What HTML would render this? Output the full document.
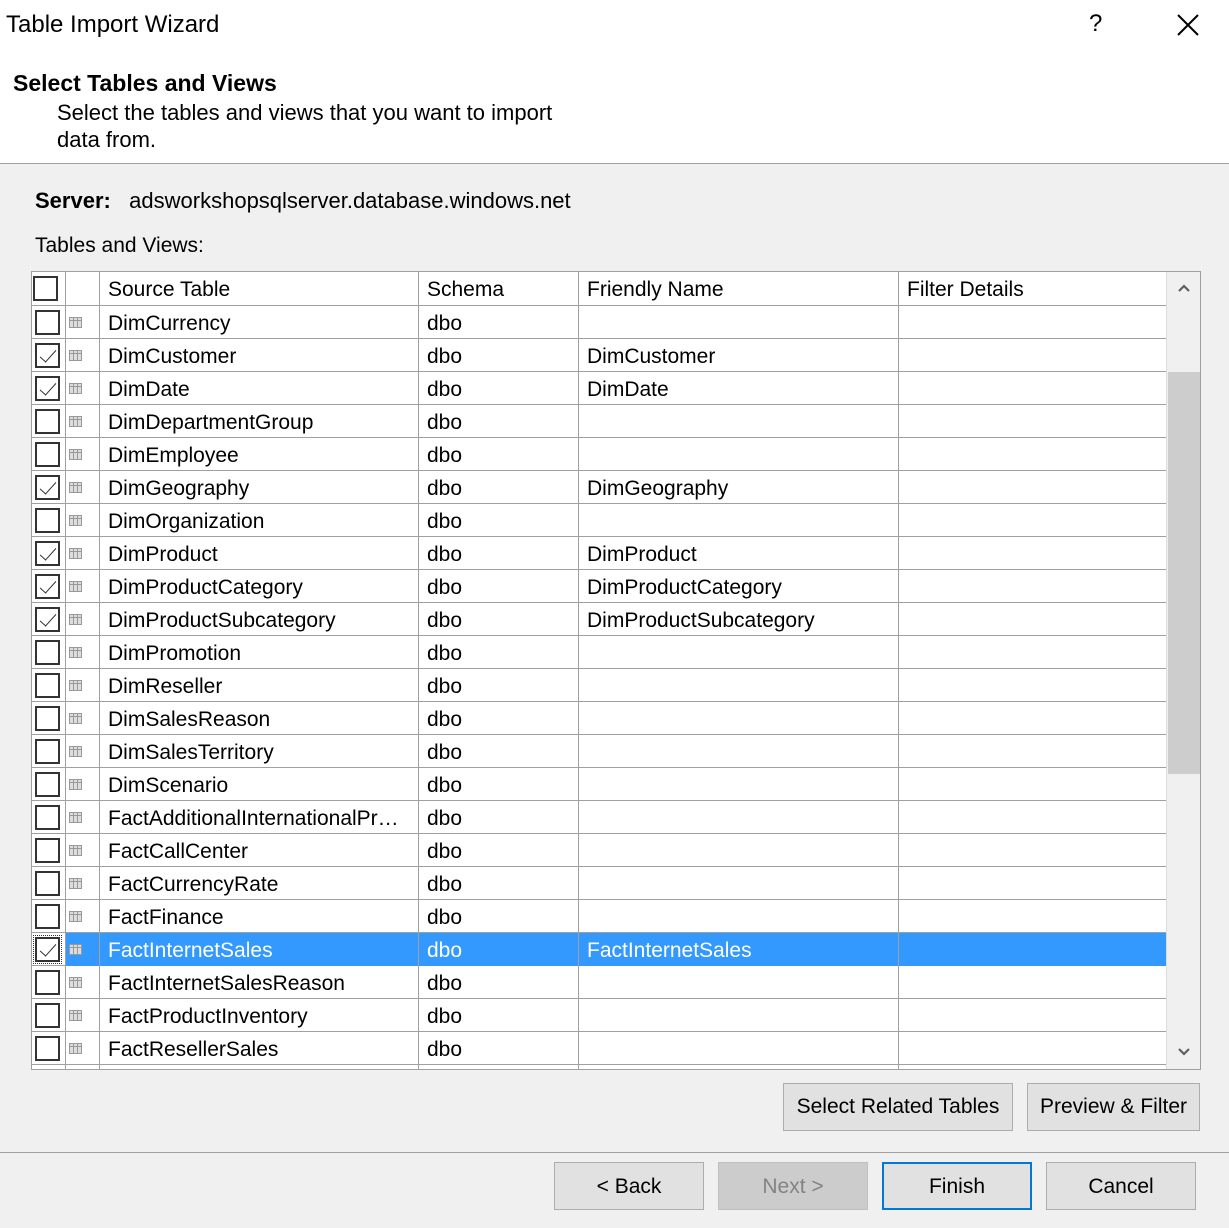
<!DOCTYPE html>
<html><head><meta charset="utf-8"><style>
*{margin:0;padding:0;box-sizing:border-box}
body{width:1229px;height:1228px;background:#f0f0f0;font-family:"Liberation Sans",sans-serif;color:#000;position:relative;overflow:hidden;font-size:21px}
.a{position:absolute;white-space:nowrap}
#top{position:absolute;left:0;top:0;width:1229px;height:164px;background:#fff;border-bottom:1px solid #a0a0a0}
#grid{position:absolute;left:31px;top:271px;width:1170px;height:799px;background:#fff;border:1px solid #a0a0a0;overflow:hidden}
.r{position:absolute;left:0;width:1135px;height:33px;border-bottom:1px solid #a0a0a0}
.r div{position:absolute;top:0;height:33px;line-height:35px;border-right:1px solid #a0a0a0;padding-left:8px;white-space:nowrap;overflow:hidden}
.c0{left:0;width:34px}.c1{left:34px;width:34px}.c2{left:68px;width:319px}.c3{left:387px;width:160px}.c4{left:547px;width:320px}.c5{left:867px;width:268px}
.cb{position:absolute;left:3px;top:4px;width:25px;height:25px;border:2px solid #333;background:#fff}
.cb.k::after{content:"";position:absolute;left:7px;top:1px;width:7px;height:15px;border-right:1.5px solid #333;border-bottom:1.5px solid #333;transform:rotate(42deg)}
.ic{position:absolute;left:3px;top:11px;width:13px;height:11px;border:1px solid #999;background:linear-gradient(#999,#999) 0 2px/100% 1px no-repeat,repeating-linear-gradient(90deg,#ddd 0 3px,#999 3px 4px),#fff}
.sel .c1,.sel .c2,.sel .c3,.sel .c4,.sel .c5{background:#3399ff;color:#fff}
.btn{position:absolute;background:#e1e1e1;border:1px solid #adadad;text-align:center;font-size:21px}
</style></head><body>
<div id="top">
<div class="a" style="left:6px;top:11px;font-size:24px">Table Import Wizard</div>
<div class="a" style="left:1089px;top:10px;font-size:24px">?</div>
<svg class="a" style="left:1177px;top:14px" width="22" height="22"><path d="M1 1L21 21M21 1L1 21" stroke="#000" stroke-width="2"/></svg>
<div class="a" style="left:13px;top:70px;font-size:23px;font-weight:bold">Select Tables and Views</div>
<div class="a" style="left:57px;top:100px;font-size:22px">Select the tables and views that you want to import</div>
<div class="a" style="left:57px;top:127px;font-size:22px">data from.</div>
</div>
<div class="a" style="left:35px;top:188px;font-size:22px"><b>Server:</b>&nbsp;&nbsp;&nbsp;adsworkshopsqlserver.database.windows.net</div>
<div class="a" style="left:35px;top:234px;font-size:21px">Tables and Views:</div>
<div id="grid">
<div class="r" style="top:0;height:34px"><div class="c0" style="background:#fff"><span class="cb" style="top:4px;left:1px"></span></div><div class="c1"></div><div class="c2" style="line-height:36px">Source Table</div><div class="c3" style="line-height:36px">Schema</div><div class="c4" style="line-height:36px">Friendly Name</div><div class="c5" style="line-height:36px">Filter Details</div></div>
<div class="r" style="top:34px"><div class="c0"><span class="cb"></span></div><div class="c1"><span class="ic"></span></div><div class="c2">DimCurrency</div><div class="c3">dbo</div><div class="c4"></div><div class="c5"></div></div>
<div class="r" style="top:67px"><div class="c0"><span class="cb k"></span></div><div class="c1"><span class="ic"></span></div><div class="c2">DimCustomer</div><div class="c3">dbo</div><div class="c4">DimCustomer</div><div class="c5"></div></div>
<div class="r" style="top:100px"><div class="c0"><span class="cb k"></span></div><div class="c1"><span class="ic"></span></div><div class="c2">DimDate</div><div class="c3">dbo</div><div class="c4">DimDate</div><div class="c5"></div></div>
<div class="r" style="top:133px"><div class="c0"><span class="cb"></span></div><div class="c1"><span class="ic"></span></div><div class="c2">DimDepartmentGroup</div><div class="c3">dbo</div><div class="c4"></div><div class="c5"></div></div>
<div class="r" style="top:166px"><div class="c0"><span class="cb"></span></div><div class="c1"><span class="ic"></span></div><div class="c2">DimEmployee</div><div class="c3">dbo</div><div class="c4"></div><div class="c5"></div></div>
<div class="r" style="top:199px"><div class="c0"><span class="cb k"></span></div><div class="c1"><span class="ic"></span></div><div class="c2">DimGeography</div><div class="c3">dbo</div><div class="c4">DimGeography</div><div class="c5"></div></div>
<div class="r" style="top:232px"><div class="c0"><span class="cb"></span></div><div class="c1"><span class="ic"></span></div><div class="c2">DimOrganization</div><div class="c3">dbo</div><div class="c4"></div><div class="c5"></div></div>
<div class="r" style="top:265px"><div class="c0"><span class="cb k"></span></div><div class="c1"><span class="ic"></span></div><div class="c2">DimProduct</div><div class="c3">dbo</div><div class="c4">DimProduct</div><div class="c5"></div></div>
<div class="r" style="top:298px"><div class="c0"><span class="cb k"></span></div><div class="c1"><span class="ic"></span></div><div class="c2">DimProductCategory</div><div class="c3">dbo</div><div class="c4">DimProductCategory</div><div class="c5"></div></div>
<div class="r" style="top:331px"><div class="c0"><span class="cb k"></span></div><div class="c1"><span class="ic"></span></div><div class="c2">DimProductSubcategory</div><div class="c3">dbo</div><div class="c4">DimProductSubcategory</div><div class="c5"></div></div>
<div class="r" style="top:364px"><div class="c0"><span class="cb"></span></div><div class="c1"><span class="ic"></span></div><div class="c2">DimPromotion</div><div class="c3">dbo</div><div class="c4"></div><div class="c5"></div></div>
<div class="r" style="top:397px"><div class="c0"><span class="cb"></span></div><div class="c1"><span class="ic"></span></div><div class="c2">DimReseller</div><div class="c3">dbo</div><div class="c4"></div><div class="c5"></div></div>
<div class="r" style="top:430px"><div class="c0"><span class="cb"></span></div><div class="c1"><span class="ic"></span></div><div class="c2">DimSalesReason</div><div class="c3">dbo</div><div class="c4"></div><div class="c5"></div></div>
<div class="r" style="top:463px"><div class="c0"><span class="cb"></span></div><div class="c1"><span class="ic"></span></div><div class="c2">DimSalesTerritory</div><div class="c3">dbo</div><div class="c4"></div><div class="c5"></div></div>
<div class="r" style="top:496px"><div class="c0"><span class="cb"></span></div><div class="c1"><span class="ic"></span></div><div class="c2">DimScenario</div><div class="c3">dbo</div><div class="c4"></div><div class="c5"></div></div>
<div class="r" style="top:529px"><div class="c0"><span class="cb"></span></div><div class="c1"><span class="ic"></span></div><div class="c2">FactAdditionalInternationalPr…</div><div class="c3">dbo</div><div class="c4"></div><div class="c5"></div></div>
<div class="r" style="top:562px"><div class="c0"><span class="cb"></span></div><div class="c1"><span class="ic"></span></div><div class="c2">FactCallCenter</div><div class="c3">dbo</div><div class="c4"></div><div class="c5"></div></div>
<div class="r" style="top:595px"><div class="c0"><span class="cb"></span></div><div class="c1"><span class="ic"></span></div><div class="c2">FactCurrencyRate</div><div class="c3">dbo</div><div class="c4"></div><div class="c5"></div></div>
<div class="r" style="top:628px"><div class="c0"><span class="cb"></span></div><div class="c1"><span class="ic"></span></div><div class="c2">FactFinance</div><div class="c3">dbo</div><div class="c4"></div><div class="c5"></div></div>
<div class="r sel" style="top:661px"><div class="c0"><span class="cb k" style="outline:1px dotted #333;outline-offset:1px"></span></div><div class="c1"><span class="ic"></span></div><div class="c2">FactInternetSales</div><div class="c3">dbo</div><div class="c4">FactInternetSales</div><div class="c5"></div></div>
<div class="r" style="top:694px"><div class="c0"><span class="cb"></span></div><div class="c1"><span class="ic"></span></div><div class="c2">FactInternetSalesReason</div><div class="c3">dbo</div><div class="c4"></div><div class="c5"></div></div>
<div class="r" style="top:727px"><div class="c0"><span class="cb"></span></div><div class="c1"><span class="ic"></span></div><div class="c2">FactProductInventory</div><div class="c3">dbo</div><div class="c4"></div><div class="c5"></div></div>
<div class="r" style="top:760px"><div class="c0"><span class="cb"></span></div><div class="c1"><span class="ic"></span></div><div class="c2">FactResellerSales</div><div class="c3">dbo</div><div class="c4"></div><div class="c5"></div></div>
<div class="r" style="top:793px"><div class="c0"><span class="cb"></span></div><div class="c1"></div><div class="c2"></div><div class="c3"></div><div class="c4"></div><div class="c5"></div></div>
<div style="position:absolute;left:1134px;top:0;width:34px;height:797px;background:#f0f0f0;border-left:1px solid #ddd">
<svg class="a" style="left:11px;top:12px" width="12" height="8"><path d="M1 7L6 2L11 7" stroke="#606060" stroke-width="2.2" fill="none"/></svg>
<div style="position:absolute;left:1px;top:100px;width:32px;height:402px;background:#cdcdcd"></div>
<svg class="a" style="left:11px;top:776px" width="12" height="8"><path d="M1 1L6 6L11 1" stroke="#606060" stroke-width="2.2" fill="none"/></svg>
</div>
</div>
<div class="btn" style="left:783px;top:1083px;width:230px;height:48px;line-height:46px">Select Related Tables</div>
<div class="btn" style="left:1027px;top:1083px;width:173px;height:48px;line-height:46px">Preview &amp; Filter</div>
<div style="position:absolute;left:0;top:1152px;width:1229px;height:1px;background:#a0a0a0"></div>
<div class="btn" style="left:554px;top:1162px;width:150px;height:48px;line-height:48px">&lt; Back</div>
<div class="btn" style="left:718px;top:1162px;width:150px;height:48px;line-height:48px;background:#ccc;border-color:#bfbfbf;color:#838383">Next &gt;</div>
<div class="btn" style="left:882px;top:1162px;width:150px;height:48px;line-height:46px;border:2px solid #0078d7">Finish</div>
<div class="btn" style="left:1046px;top:1162px;width:150px;height:48px;line-height:48px">Cancel</div>
</body></html>
